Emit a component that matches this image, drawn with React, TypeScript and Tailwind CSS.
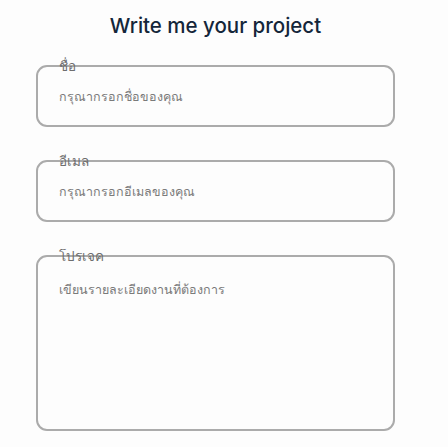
import React from 'react';

const fields = [
    { label: 'ชื่อ', placeholder: 'กรุณากรอกชื่อของคุณ', tall: false },
    { label: 'อีเมล', placeholder: 'กรุณากรอกอีเมลของคุณ', tall: false },
    { label: 'โปรเจค', placeholder: 'เขียนรายละเอียดงานที่ต้องการ', tall: true },
];

const App: React.FC = () => {
    return (
        <div className="min-h-screen bg-[#fdfdfd] font-['Noto_Sans',sans-serif]">
            <div className="w-[431px]">
                <h1 className="pt-[12px] text-center text-[20.5px] leading-[28px] font-medium text-[#14263a] font-['Inter',sans-serif]">
                    Write me your project
                </h1>
                <div className="flex flex-col gap-[33px] px-[36px] pt-[25px]">
                    {fields.map((f) => (
                        <div
                            key={f.label}
                            className={`relative border-2 border-[#ababab] rounded-[11px] ${f.tall ? 'h-[176px]' : 'h-[62px]'}`}
                        >
                            <span className="absolute left-[21px] top-[-11px] text-[13.5px] leading-[20px] font-medium text-[#6e6e6e]">
                                {f.label}
                            </span>
                            <div
                                className={`pl-[21px] text-[12.5px] leading-[18px] text-[#7a7a7a] ${f.tall ? 'pt-[24px]' : 'pt-[21px]'}`}
                            >
                                {f.placeholder}
                            </div>
                        </div>
                    ))}
                </div>
            </div>
        </div>
    );
};

export default App;
